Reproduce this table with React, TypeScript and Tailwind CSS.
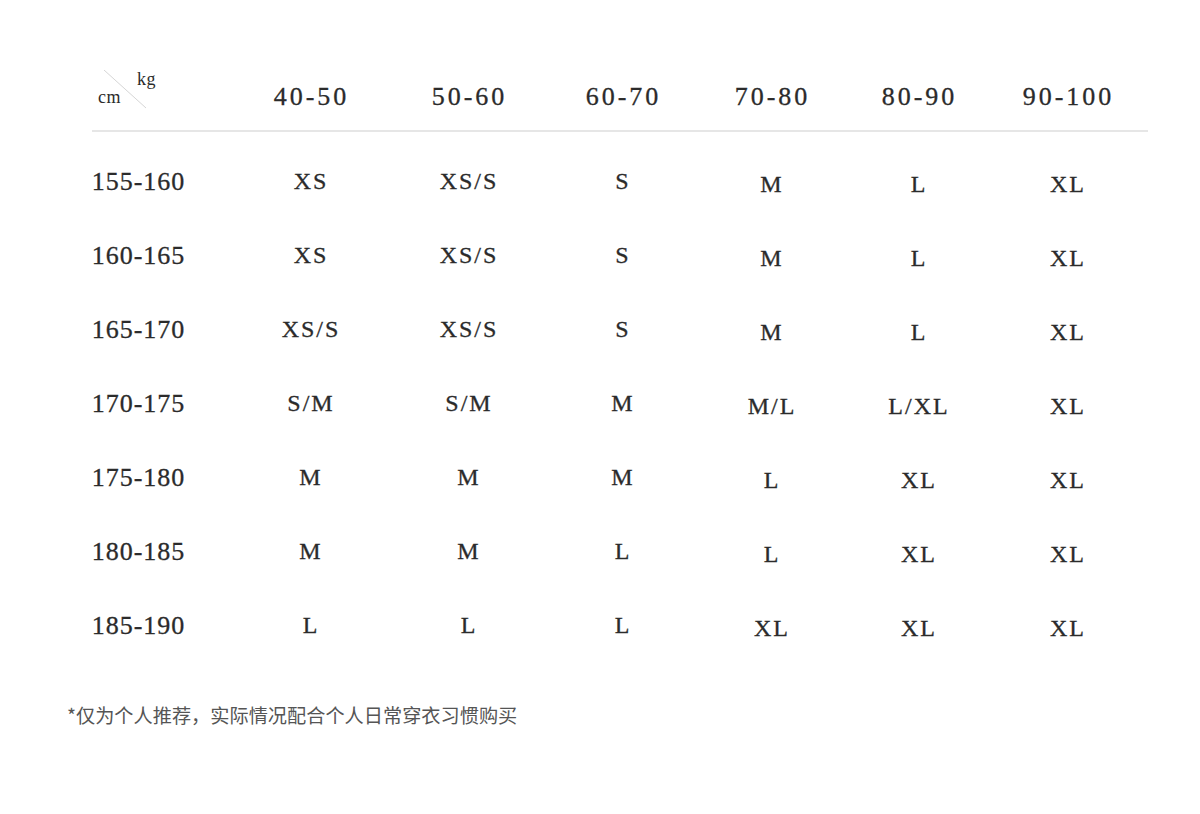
const heads = ["40-50", "50-60", "60-70", "70-80", "80-90", "90-100"];

const rows: [string, string[]][] = [
  ["155-160", ["XS", "XS/S", "S", "M", "L", "XL"]],
  ["160-165", ["XS", "XS/S", "S", "M", "L", "XL"]],
  ["165-170", ["XS/S", "XS/S", "S", "M", "L", "XL"]],
  ["170-175", ["S/M", "S/M", "M", "M/L", "L/XL", "XL"]],
  ["175-180", ["M", "M", "M", "L", "XL", "XL"]],
  ["180-185", ["M", "M", "L", "L", "XL", "XL"]],
  ["185-190", ["L", "L", "L", "XL", "XL", "XL"]],
];

const grid =
  "grid grid-cols-[132px_172px_144px_164px_134px_160px_150px] items-center";

export default function App() {
  return (
    <div className="w-[1200px] h-[814px] bg-white text-[#2b2b2b] [font-family:'Liberation_Serif',serif]">
      <div className="pt-[62px] pl-[92px] [-webkit-text-stroke:0.3px_#2b2b2b]">
        {/* header */}
        <div className={`${grid} h-[68px]`}>
          <div className="relative h-full [-webkit-text-stroke:0px]">
            <svg className="absolute left-[12px] top-[8px]" width="44" height="40" viewBox="0 0 44 40">
              <line x1="0" y1="0" x2="42" y2="38" stroke="#d6d6d6" strokeWidth="1" />
            </svg>
            <span className="absolute left-[45px] top-[4px] text-[18px] tracking-[0.5px]">kg</span>
            <span className="absolute left-[6px] top-[22px] text-[18px] tracking-[0.5px]">cm</span>
          </div>
          {heads.map((h, i) => (
            <div
              key={h}
              className={`text-center whitespace-nowrap text-[26px] tracking-[3px] pl-[3px] ${i === 5 ? "pr-[12px]" : ""}`}
            >
              {h}
            </div>
          ))}
        </div>
        <div className="w-[1056px] h-[2px] bg-[#e6e6e6]" />

        {/* rows */}
        <div className="pt-[12px]">
          {rows.map(([label, vals]) => (
            <div key={label} className={`${grid} h-[74px]`}>
              <div className="w-[92px] flex justify-center whitespace-nowrap text-[26px] tracking-[1px] pl-[1px]">
                {label}
              </div>
              {vals.map((v, i) => (
                <div
                  key={i}
                  className={`text-center whitespace-nowrap text-[24px] tracking-[2px] pl-[2px] ${i >= 3 ? "pt-[6px]" : ""} ${i === 5 ? "pr-[12px]" : ""}`}
                >
                  {v}
                </div>
              ))}
            </div>
          ))}
        </div>
      </div>

      <p className="mt-[40px] pl-[67px] text-[19.2px] leading-[26px] text-[#555] [font-family:'Noto_Sans_CJK_SC',sans-serif]">
        *仅为个人推荐，实际情况配合个人日常穿衣习惯购买
      </p>
    </div>
  );
}
